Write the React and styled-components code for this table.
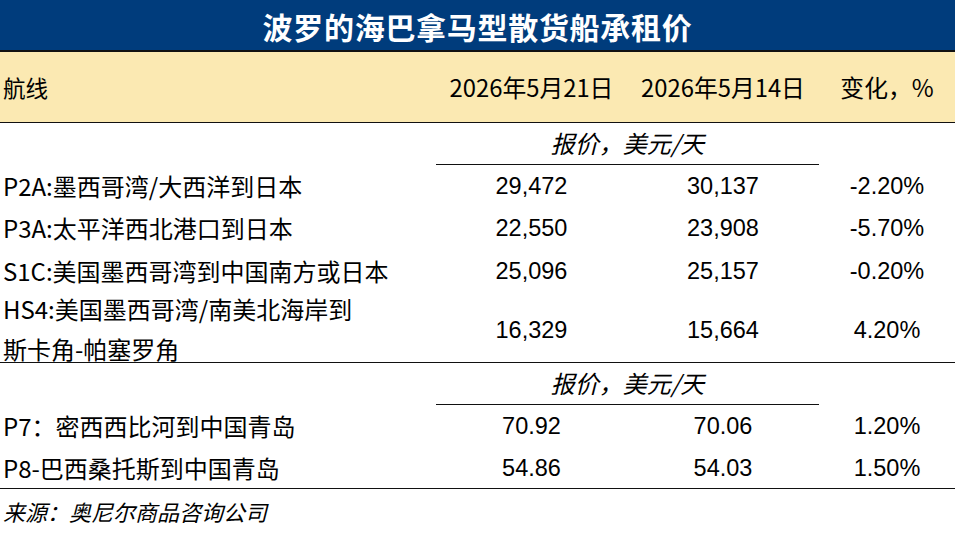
import React from "react";
import styled, { createGlobalStyle } from "styled-components";

const GlobalStyle = createGlobalStyle`
    html, body {
        margin: 0;
        padding: 0;
        background: #ffffff;
    }
    body {
        font-family: "Noto Sans CJK SC", "Noto Sans", sans-serif;
        color: #000;
    }
`;

const CJK = `"Noto Sans CJK SC", "Noto Sans", sans-serif`;
const NUM = `"Liberation Sans", Arial, "Noto Sans CJK SC", sans-serif`;

const Sheet = styled.div`
    width: 955px;
    height: 535px;
    overflow: hidden;
    background: #fff;
`;

const TitleBar = styled.div`
    height: 52px;
    background: #003c7c;
    border-bottom: 2px solid #111;
    display: flex;
    align-items: center;
    justify-content: center;
    color: #fff;
    font-family: ${CJK};
    font-weight: 700;
    font-size: 30px;
    letter-spacing: 0.7px;
    padding-top: 1px;
    box-sizing: border-box;
`;

const Row = styled.div`
    display: grid;
    grid-template-columns: 436px 191px 192px 1fr;
    height: ${(p) => p.h - (p.pt || 0)}px;
    padding-top: ${(p) => p.pt || 0}px;
    align-items: center;
    background: ${(p) => p.bg || "transparent"};
    border-bottom: ${(p) => (p.ruled ? "1px solid #111" : "none")};
`;

const Label = styled.div`
    padding-left: 3px;
    font-family: ${CJK};
    font-size: ${(p) => p.size || 24}px;
    line-height: ${(p) => p.lh || 30}px;
    white-space: nowrap;
`;

// two-line route name, lines spaced wider than the row allows
const TallLabel = styled(Label)`
    line-height: 40px;
    margin: -9px 0 -7px;
`;

const HeadCell = styled.div`
    text-align: center;
    font-family: ${CJK};
    font-size: 23.8px;
    line-height: 30px;
    white-space: nowrap;
`;

const Num = styled.div`
    text-align: center;
    font-family: ${NUM};
    font-size: 23.5px;
    line-height: 30px;
`;

const UnitCell = styled.div`
    grid-column: 2 / span 2;
    align-self: stretch;
    display: flex;
    align-items: center;
    justify-content: center;
    border-bottom: 1px solid #111;
    font-family: ${CJK};
    font-style: italic;
    font-size: 24px;
    padding-bottom: 2px;
`;

const Source = styled.div`
    height: 40px;
    display: flex;
    align-items: center;
    padding: 2px 0 0 3px;
    font-family: ${CJK};
    font-style: italic;
    font-size: 22px;
`;

const groups = [
    [
        { route: "P2A:墨西哥湾/大西洋到日本", now: "29,472", prev: "30,137", chg: "-2.20%", h: 42 },
        { route: "P3A:太平洋西北港口到日本", now: "22,550", prev: "23,908", chg: "-5.70%", h: 42 },
        { route: "S1C:美国墨西哥湾到中国南方或日本", now: "25,096", prev: "25,157", chg: "-0.20%", h: 43 },
        { route: ["HS4:美国墨西哥湾/南美北海岸到", "斯卡角-帕塞罗角"], now: "16,329", prev: "15,664", chg: "4.20%", h: 71 },
    ],
    [
        { route: "P7：密西西比河到中国青岛", now: "70.92", prev: "70.06", chg: "1.20%", h: 42 },
        { route: "P8-巴西桑托斯到中国青岛", now: "54.86", prev: "54.03", chg: "1.50%", h: 42 },
    ],
];

const DataRow = ({ row, last }) => {
    const twoLine = Array.isArray(row.route);
    const ruled = last || twoLine;
    return (
        <Row h={ruled ? row.h - 1 : row.h} pt={twoLine ? 5 : 0} ruled={ruled}>
            {twoLine ? (
                <TallLabel>
                    {row.route[0]}
                    <br />
                    {row.route[1]}
                </TallLabel>
            ) : (
                <Label>{row.route}</Label>
            )}
            <Num>{row.now}</Num>
            <Num>{row.prev}</Num>
            <Num>{row.chg}</Num>
        </Row>
    );
};

const App = () => (
    <Sheet>
        <GlobalStyle />
        <TitleBar>波罗的海巴拿马型散货船承租价</TitleBar>
        <Row h={70} bg="#fbe9b2" ruled>
            <Label size={22.5}>航线</Label>
            <HeadCell>2026年5月21日</HeadCell>
            <HeadCell>2026年5月14日</HeadCell>
            <HeadCell>变化，%</HeadCell>
        </Row>
        {groups.map((group, gi) => (
            <React.Fragment key={gi}>
                <Row h={42}>
                    <UnitCell>报价，美元/天</UnitCell>
                </Row>
                {group.map((row, ri) => (
                    <DataRow key={ri} row={row} last={gi === groups.length - 1 && ri === group.length - 1} />
                ))}
            </React.Fragment>
        ))}
        <Source>来源：奥尼尔商品咨询公司</Source>
    </Sheet>
);

export default App;
